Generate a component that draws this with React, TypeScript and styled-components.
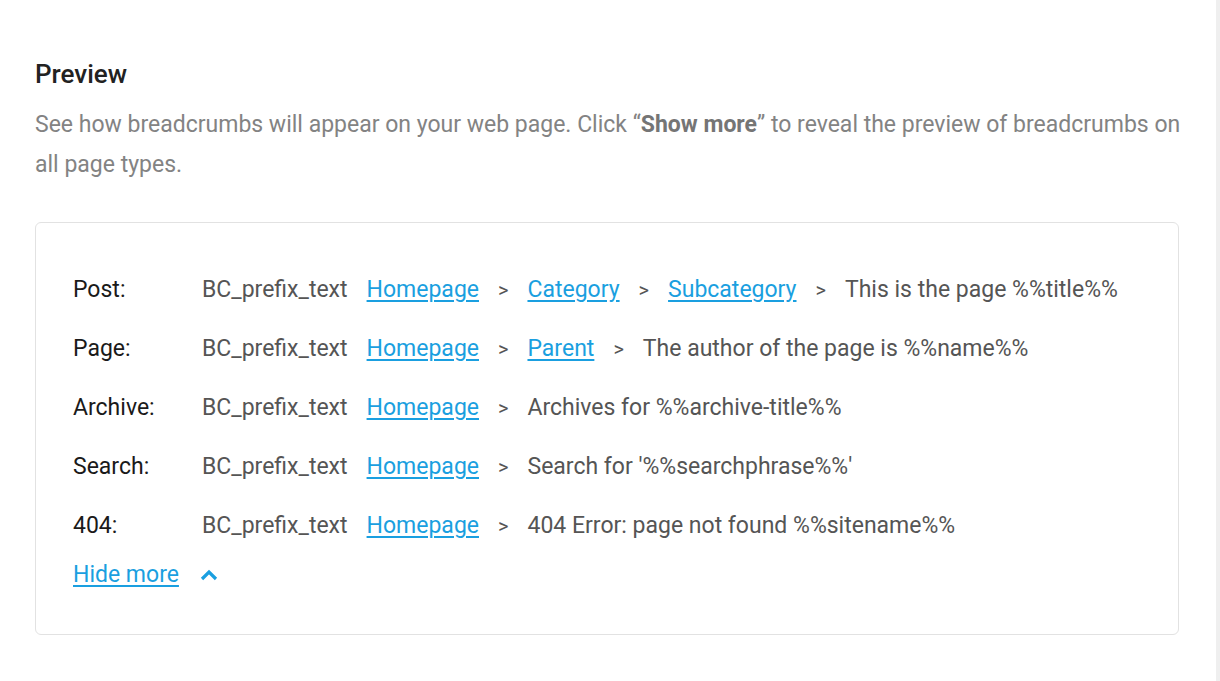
import React from "react";
import styled, { createGlobalStyle } from "styled-components";

const Global = createGlobalStyle`
  html, body { margin: 0; padding: 0; background: #ffffff; }
  body { font-family: Roboto, "Liberation Sans", Arial, sans-serif; }
`;

const Page = styled.div`
  display: flex;
  width: 1220px;
  height: 681px;
  background: #ffffff;
  overflow: hidden;
`;

const Main = styled.main`
  flex: 1;
  padding: 56px 37px 0 35px;
`;

const ScrollEdge = styled.div`
  width: 4px;
  background: #efefef;
`;

const Title = styled.h2`
  margin: 0;
  font-size: 26px;
  line-height: 36px;
  font-weight: 500;
  color: #222222;
`;

const Description = styled.p`
  margin: 13px -30px 0 0;
  font-size: 23px;
  line-height: 40px;
  color: #838383;
  strong { font-weight: 700; color: #757575; }
`;

const Card = styled.section`
  margin-top: 37px;
  border: 1px solid #e2e2e2;
  border-radius: 6px;
  padding: 37px 37px 45px;
`;

const Row = styled.div`
  display: grid;
  grid-template-columns: 129px 1fr;
  align-items: center;
  height: 59px;
  font-size: 23px;
`;

const Label = styled.span`
  color: #1a1a1a;
  font-weight: 400;
`;

const Trail = styled.div`
  display: flex;
  align-items: center;
  color: #555555;
  white-space: nowrap;
`;

const Prefix = styled.span`
  margin-right: 19px;
`;

const Crumb = styled.a`
  color: #1a9fe0;
  text-decoration: underline;
  text-underline-offset: 3px;
  cursor: pointer;
`;

const Sep = styled.span`
  margin: 0 19px;
  font-size: 20px;
  color: #555555;
`;

const Toggle = styled.button`
  display: flex;
  align-items: center;
  gap: 21px;
  margin-top: 6px;
  padding: 0;
  border: 0;
  background: none;
  font-family: inherit;
  font-size: 23px;
  line-height: 28px;
  color: #1a9fe0;
  cursor: pointer;
  span { text-decoration: underline; text-underline-offset: 3px; }
`;

type RowData = { label: string; links: string[]; tail: string };

const rows: RowData[] = [
  { label: "Post:", links: ["Homepage", "Category", "Subcategory"], tail: "This is the page %%title%%" },
  { label: "Page:", links: ["Homepage", "Parent"], tail: "The author of the page is %%name%%" },
  { label: "Archive:", links: ["Homepage"], tail: "Archives for %%archive-title%%" },
  { label: "Search:", links: ["Homepage"], tail: "Search for '%%searchphrase%%'" },
  { label: "404:", links: ["Homepage"], tail: "404 Error: page not found %%sitename%%" },
];

const Chevron = () => (
  <svg width="18" height="12" viewBox="0 0 18 12" fill="none">
    <path d="M2 10 L9 3 L16 10" stroke="#1a9fe0" strokeWidth="3.2" strokeLinecap="butt" strokeLinejoin="miter" />
  </svg>
);

export default function App() {
  return (
    <>
      <Global />
      <Page>
        <Main>
          <Title>Preview</Title>
          <Description>
            See how breadcrumbs will appear on your web page. Click “<strong>Show more</strong>” to reveal the preview of breadcrumbs on all page types.
          </Description>
          <Card>
            {rows.map((r) => (
              <Row key={r.label}>
                <Label>{r.label}</Label>
                <Trail>
                  <Prefix>BC_prefix_text</Prefix>
                  {r.links.map((l) => (
                    <React.Fragment key={l}>
                      <Crumb>{l}</Crumb>
                      <Sep>&gt;</Sep>
                    </React.Fragment>
                  ))}
                  <span>{r.tail}</span>
                </Trail>
              </Row>
            ))}
            <Toggle>
              <span>Hide more</span>
              <Chevron />
            </Toggle>
          </Card>
        </Main>
        <ScrollEdge />
      </Page>
    </>
  );
}
